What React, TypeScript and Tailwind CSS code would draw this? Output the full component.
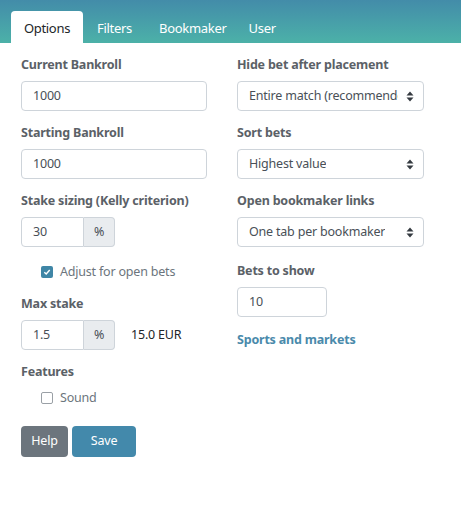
import React from "react";

const font = { fontFamily: '"Noto Sans", "Open Sans", Arial, sans-serif' };

function Caret() {
  return (
    <svg width="8" height="11" viewBox="0 0 8 11" className="shrink-0">
      <path d="M4 0.5 L7.5 4.5 L0.5 4.5 Z" fill="#343a40" />
      <path d="M4 10.5 L7.5 6.5 L0.5 6.5 Z" fill="#343a40" />
    </svg>
  );
}

function Label({ children }: { children: React.ReactNode }) {
  return (
    <div className="text-[12.5px] leading-[20px] font-bold text-[#5b6167] mb-[6px] tracking-[-0.2px] whitespace-nowrap">
      {children}
    </div>
  );
}

function TextBox({ value, w = "w-[186px]" }: { value: string; w?: string }) {
  return (
    <div
      className={`${w} h-[30px] border border-[#ced4da] rounded-[4px] bg-white flex items-center pl-[11px] text-[12.5px] tracking-[-0.2px] text-[#495057]`}
    >
      {value}
    </div>
  );
}

function Select({ value }: { value: string }) {
  return (
    <div className="w-[187px] h-[30px] border border-[#ced4da] rounded-[4px] bg-white flex items-center justify-between pl-[11px] pr-[9px] text-[12.5px] tracking-[-0.2px] text-[#495057] whitespace-nowrap">
      <span className="overflow-hidden mr-[8px]">{value}</span>
      <Caret />
    </div>
  );
}

function PercentGroup({ value }: { value: string }) {
  return (
    <div className="flex h-[30px] w-[94px] text-[12.5px] tracking-[-0.2px] text-[#495057]">
      <div className="w-[63px] h-full border border-[#ced4da] rounded-l-[4px] bg-white flex items-center pl-[11px]">
        {value}
      </div>
      <div className="w-[31px] h-full border border-l-0 border-[#ced4da] rounded-r-[4px] bg-[#e9ecef] flex items-center justify-center">
        %
      </div>
    </div>
  );
}

function Check({ checked, label }: { checked: boolean; label: string }) {
  return (
    <div className="flex items-center pl-[20px] h-[20px] text-[12.5px] tracking-[-0.2px] text-[#6c757d]">
      {checked ? (
        <div className="w-[12px] h-[12px] rounded-[2px] bg-[#3f86a6] flex items-center justify-center">
          <svg width="8" height="8" viewBox="0 0 8 8">
            <path d="M1.3 4.2 L3.2 6 L6.7 2" stroke="white" strokeWidth="1.4" fill="none" />
          </svg>
        </div>
      ) : (
        <div className="w-[12px] h-[12px] rounded-[2px] border border-[#9aa0a6] bg-white" />
      )}
      <span className="ml-[7px]">{label}</span>
    </div>
  );
}

export default function App() {
  return (
    <div className="w-[461px] h-[529px] bg-white" style={font}>
      <div className="h-[43px] bg-gradient-to-b from-[#438ca9] to-[#4cb1a8] flex items-end pl-[11px]">
        <div className="h-[32px] w-[72px] pt-[4px] bg-white rounded-t-[4px] flex items-center justify-center text-[13px] tracking-[-0.3px] text-[#212529]">
          Options
        </div>
        <div className="h-[32px] pt-[4px] flex items-center text-[13px] tracking-[-0.3px] text-white">
          <span className="ml-[14px]">Filters</span>
          <span className="ml-[27px]">Bookmaker</span>
          <span className="ml-[22px]">User</span>
        </div>
      </div>
      <div className="flex pl-[21px] pt-[12px]">
        <div className="w-[216px] flex flex-col">
          <Label>Current Bankroll</Label>
          <TextBox value="1000" />
          <div className="h-[12px]" />
          <Label>Starting Bankroll</Label>
          <TextBox value="1000" />
          <div className="h-[12px]" />
          <Label>Stake sizing (Kelly criterion)</Label>
          <PercentGroup value="30" />
          <div className="h-[15px]" />
          <Check checked label="Adjust for open bets" />
          <div className="h-[12px]" />
          <Label>Max stake</Label>
          <div className="flex items-center">
            <PercentGroup value="1.5" />
            <span className="ml-[16px] text-[12.5px] tracking-[-0.2px] text-[#212529]">15.0 EUR</span>
          </div>
          <div className="h-[12px]" />
          <Label>Features</Label>
          <Check checked={false} label="Sound" />
          <div className="flex gap-[4px] mt-[18px]">
            <div className="h-[31px] w-[47px] rounded-[4px] bg-[#6c757d] text-white text-[12.5px] tracking-[-0.2px] flex items-center justify-center">
              Help
            </div>
            <div className="h-[31px] w-[64px] rounded-[4px] bg-[#4389ab] text-white text-[12.5px] tracking-[-0.2px] flex items-center justify-center">
              Save
            </div>
          </div>
        </div>
        <div className="flex flex-col">
          <Label>Hide bet after placement</Label>
          <Select value="Entire match (recommended)" />
          <div className="h-[12px]" />
          <Label>Sort bets</Label>
          <Select value="Highest value" />
          <div className="h-[12px]" />
          <Label>Open bookmaker links</Label>
          <Select value="One tab per bookmaker" />
          <div className="h-[14px]" />
          <Label>Bets to show</Label>
          <TextBox value="10" w="w-[90px]" />
          <div className="h-[13px]" />
          <div className="text-[12.5px] leading-[20px] font-bold tracking-[-0.2px] text-[#4a8aab]">Sports and markets</div>
        </div>
      </div>
    </div>
  );
}
